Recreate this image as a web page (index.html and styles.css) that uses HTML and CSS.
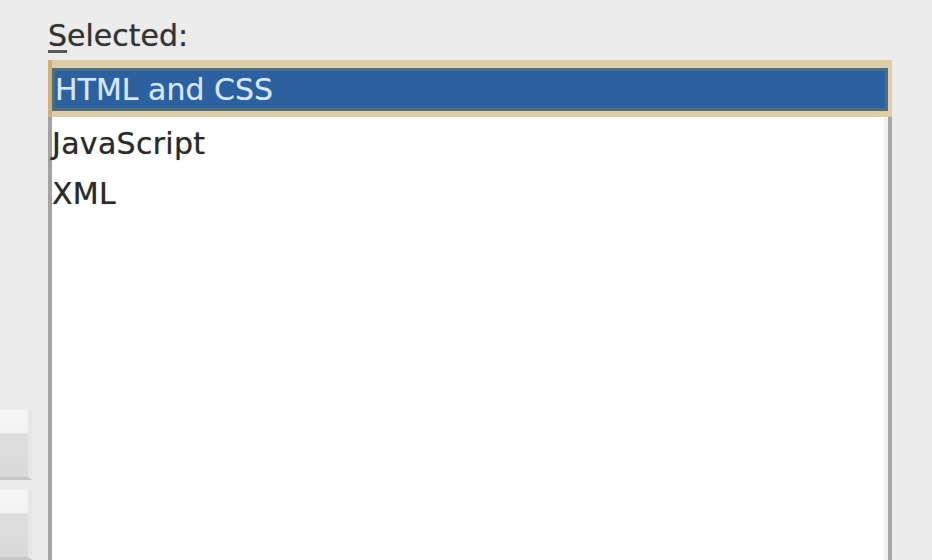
FILE: index.html
```html
<!DOCTYPE html>
<html>
<head>
<meta charset="utf-8">
<link rel="stylesheet" href="styles.css">
</head>
<body>
<div class="dialog">
  <div class="side">
    <div class="btn"></div>
    <div class="btn"></div>
  </div>
  <div class="main">
    <div class="label"><span class="acc">S</span>elected:</div>
    <div class="listbox">
      <div class="item selected"><div class="sel-inner">HTML and CSS</div></div>
      <div class="item first">JavaScript</div>
      <div class="item">XML</div>
    </div>
  </div>
</div>
</body>
</html>
```

FILE: styles.css
```css
html, body {
  margin: 0;
  padding: 0;
  background: #ececec;
  overflow: hidden;
  width: 932px;
  height: 560px;
}

.dialog {
  display: flex;
  font-family: "DejaVu Sans", sans-serif;
  font-size: 30px;
  color: #2a2a2a;
  text-shadow: 0 0 1px rgba(40, 40, 40, 0.55);
}

.side {
  width: 48px;
  flex: none;
  display: flex;
  flex-direction: column;
  padding-top: 410px;
  gap: 10px;
}

.btn {
  width: 32px;
  height: 70px;
  box-sizing: border-box;
  background: linear-gradient(#f6f6f6 0, #f3f3f3 34%, #dedede 36%, #d9d9d9 100%);
  border-bottom: 3px solid #c9c9c9;
  border-right: 4px solid #e6e6e6;
}

.main {
  width: 844px;
  flex: none;
}

.label {
  padding-top: 18px;
  padding-bottom: 6px;
  line-height: 36px;
  color: #333333;
}

.acc {
  text-decoration: underline;
  text-decoration-thickness: 3px;
  text-underline-offset: 4px;
  text-decoration-color: #5a5a5a;
}

.listbox {
  height: 520px;
  background: #ffffff;
  border-left: 4px solid #a2a2a2;
  border-right: 4px solid #a6a6a6;
  box-shadow: inset -4px 0 0 #f0f0f0;
}

.item {
  line-height: 50px;
  white-space: nowrap;
  letter-spacing: 0.3px;
}

.item.first {
  margin-top: 2px;
}

.selected {
  margin: 0 -4px;
  padding: 8px 4px 6px 4px;
  background: #ddcda8;
  border-left: 0;
  box-shadow: inset 4px 0 0 #cfb07c;
  line-height: 37px;
  letter-spacing: 0;
}

.sel-inner {
  border: 3px solid #506c82;
  background: #2c609e;
  color: #d4e7ff;
  text-shadow: 0 0 1px rgba(200, 225, 255, 0.5);
}
```
